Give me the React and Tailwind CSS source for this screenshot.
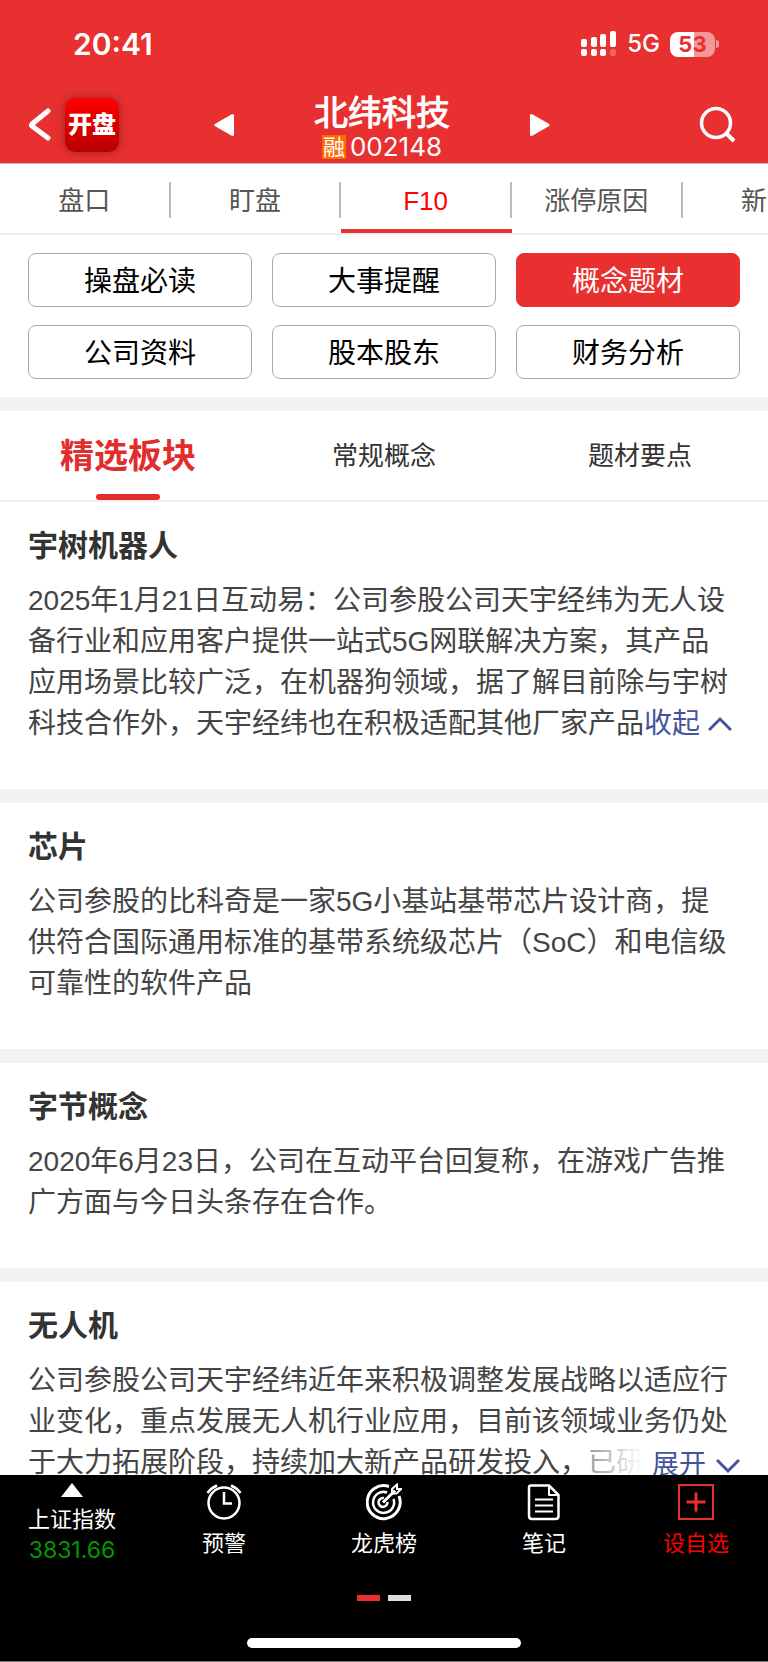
import { useState } from 'react';

const tabs = ['盘口', '盯盘', 'F10', '涨停原因', '新闻'];
const menus = ['操盘必读', '大事提醒', '概念题材', '公司资料', '股本股东', '财务分析'];
const topics = ['精选板块', '常规概念', '题材要点'];

const concepts = [
  {
    title: '宇树机器人',
    text: '2025年1月21日互动易：公司参股公司天宇经纬为无人设备行业和应用客户提供一站式5G网联解决方案，其产品应用场景比较广泛，在机器狗领域，据了解目前除与宇树科技合作外，天宇经纬也在积极适配其他厂家产品',
    state: 'open',
  },
  {
    title: '芯片',
    text: '公司参股的比科奇是一家5G小基站基带芯片设计商，提供符合国际通用标准的基带系统级芯片（SoC）和电信级可靠性的软件产品',
  },
  {
    title: '字节概念',
    text: '2020年6月23日，公司在互动平台回复称，在游戏广告推广方面与今日头条存在合作。',
  },
  {
    title: '无人机',
    text: '公司参股公司天宇经纬近年来积极调整发展战略以适应行业变化，重点发展无人机行业应用，目前该领域业务仍处于大力拓展阶段，持续加大新产品研发投入，已研',
    state: 'closed',
  },
];

// Signal, network type and battery
function StatusBar() {
  return (
    <div className="flex h-[86px] items-center justify-between pt-0.5 pr-[49px] pl-[73px] font-['Inter','Noto_Sans_CJK_SC',sans-serif] text-white">
      <span className="text-[30px] leading-9 font-semibold">20:41</span>
      <div className="flex items-center gap-[10px]">
        <svg width="36" height="26" viewBox="0 0 36 26" fill="#fff" aria-hidden="true">
          <rect x="0" y="8" width="6" height="8" rx="2" />
          <rect x="10" y="6" width="6" height="10" rx="2" />
          <rect x="19" y="3" width="6" height="13" rx="2" />
          <rect x="29" y="0" width="6" height="16" rx="2" />
          <rect x="0" y="18" width="6" height="7" rx="2" />
          <rect x="10" y="18" width="6" height="7" rx="2" />
          <rect x="19" y="18" width="6" height="7" rx="2" />
          <rect x="29" y="18" width="6" height="7" rx="2" opacity="0.25" />
        </svg>
        <span className="text-2xl leading-7 font-medium">5G</span>
        <div className="flex items-center gap-px">
          <span className="flex h-[25px] w-[45px] items-center justify-center rounded-lg bg-linear-to-r from-white from-54% to-white/50 to-54% text-[22px] leading-6 font-bold text-[#e83030]">
            53
          </span>
          <span className="h-2 w-[3px] rounded-r-full bg-white/50" />
        </div>
      </div>
    </div>
  );
}

// Stock title with previous / next arrows
function StockHeader() {
  return (
    <div className="grid h-[77px] grid-cols-[1fr_auto_1fr] items-center pr-8 pl-7 text-white">
      <div className="flex items-center justify-between">
        <div className="flex items-center gap-3">
          <button type="button" aria-label="返回">
            <svg width="25" height="36" viewBox="0 0 25 36" fill="none" stroke="#fff" strokeWidth="5" strokeLinecap="round" strokeLinejoin="round">
              <path d="M20 4 L4 17 Q3 18 4 19 L20 31" />
            </svg>
          </button>
          <span className="flex size-[54px] items-center justify-center rounded-[10px] bg-linear-to-b from-[#ff0000] to-[#b80000] text-2xl font-black shadow-[0_0_8px_rgba(0,0,0,0.35)]">
            开盘
          </span>
        </div>
        <button type="button" aria-label="上一只" className="mr-20">
          <svg width="20" height="24" viewBox="0 0 20 24" fill="#fff" stroke="#fff" strokeWidth="3" strokeLinejoin="round">
            <path d="M18.500 2.500 V21.500 L2 12 Z" />
          </svg>
        </button>
      </div>
      <div className="flex flex-col items-center pt-2">
        <h1 className="text-[34px] leading-9 [-webkit-text-stroke:1px_#fff]">北纬科技</h1>
        <p className="flex items-center gap-1 font-['Inter','Noto_Sans_CJK_SC',sans-serif] text-[26px] leading-8">
          <span className="bg-[#ff6a00] px-px text-[22px] leading-6">融</span>
          002148
        </p>
      </div>
      <div className="flex items-center justify-between">
        <button type="button" aria-label="下一只" className="ml-20">
          <svg width="20" height="24" viewBox="0 0 20 24" fill="#fff" stroke="#fff" strokeWidth="3" strokeLinejoin="round">
            <path d="M1.500 2.500 V21.500 L18 12 Z" />
          </svg>
        </button>
        <button type="button" aria-label="搜索">
          <svg width="38" height="38" viewBox="0 0 38 38" fill="none" stroke="#fff" strokeWidth="3.500">
            <circle cx="18" cy="17" r="14.500" />
            <path d="M28 27 L36 35" strokeWidth="4" />
          </svg>
        </button>
      </div>
    </div>
  );
}

function ConceptSection({ item }) {
  const [state, setState] = useState(item.state);

  return (
    <section className="relative border-b-[14px] border-[#f2f2f2] pt-[23px] pr-8 pb-[45px] pl-7">
      <h2 className="text-[30px] leading-[42px] font-bold text-[#333]">{item.title}</h2>
      <p className="mt-[13px] text-[28px] leading-[41px] text-[#444]">
        {item.text}
        {state === 'open' && (
          <button type="button" onClick={() => setState('closed')} className="inline-flex items-center gap-2 text-[#44549c]">
            收起
            <svg width="24" height="16" viewBox="0 0 24 16" fill="none" stroke="currentColor" strokeWidth="3">
              <path d="M1 14 L12 3 L23 14" />
            </svg>
          </button>
        )}
      </p>
      {state === 'closed' && (
        <button
          type="button"
          onClick={() => setState('open')}
          className="absolute right-0 bottom-[42px] flex items-center gap-[10px] bg-linear-to-r from-white/30 to-white to-35% pr-7 pl-[78px] text-[27px] leading-[41px] text-[#44549c]"
        >
          展开
          <svg width="24" height="16" viewBox="0 0 24 16" fill="none" stroke="currentColor" strokeWidth="3">
            <path d="M1 2 L12 13 L23 2" />
          </svg>
        </button>
      )}
    </section>
  );
}

function AlarmIcon() {
  return (
    <svg width="36" height="38" viewBox="0 0 36 38" fill="none" stroke="#fff" strokeWidth="2.500">
      <circle cx="18" cy="20" r="15.500" />
      <path d="M18 9 V20.500 H26" />
      <path d="M1.500 10 Q5 5 11 2.500 M34.500 10 Q31 5 25 2.500" />
    </svg>
  );
}

function TargetIcon() {
  return (
    <svg width="36" height="38" viewBox="0 0 36 38" fill="none" stroke="#fff" strokeWidth="2">
      <path d="M23 3.500 A16.500 16.500 0 1 0 33 13" strokeWidth="3" />
      <path d="M21 9.500 A10.500 10.500 0 1 0 27.500 16" strokeWidth="2.500" />
      <path d="M18 15 A4.500 4.500 0 1 0 21.500 19" strokeWidth="2.500" />
      <path d="M17 19.500 L29 7.500" strokeWidth="3" />
      <path d="M26 10 V6 L31 1.500 V6 H35 L30.500 10.500 H26" />
    </svg>
  );
}

function NoteIcon() {
  return (
    <svg width="36" height="38" viewBox="0 0 36 38" fill="none" stroke="#fff" strokeWidth="2.500" strokeLinejoin="round">
      <path d="M5 2.500 H23 L32.500 12 V33 Q32.500 36 29.500 36 H6 Q3 36 3 33 V4.500 Q3 2.500 5 2.500 Z" />
      <path d="M23 3 V12 H32" strokeWidth="2" />
      <path d="M9 16.500 H27 M9 22.500 H27 M9 28.500 H27" strokeWidth="2" />
    </svg>
  );
}

function AddIcon() {
  return (
    <svg width="36" height="38" viewBox="0 0 36 38" fill="none" stroke="#e83030" strokeWidth="2">
      <rect x="1" y="2" width="34" height="34" />
      <path d="M18 9.500 V28.500 M8.500 19 H27.500" strokeWidth="3" />
    </svg>
  );
}

// Bottom toolbar
function BottomBar() {
  const itemClass = 'flex flex-1 flex-col items-center gap-2';

  return (
    <footer className="flex h-[187px] shrink-0 flex-col items-center border-b border-[#777] bg-black text-[22px] leading-[30px] text-white">
      <div className="flex w-full pt-2">
        <button type="button" className="flex w-36 flex-col items-center">
          <svg width="22" height="14" viewBox="0 0 22 14" fill="#fff" aria-hidden="true">
            <path d="M11 0 L22 14 H0 Z" />
          </svg>
          <span className="mt-2">上证指数</span>
          <span className="font-['Inter','Noto_Sans_CJK_SC',sans-serif] text-[23px] text-[#009900]">3831.66</span>
        </button>
        <button type="button" className={itemClass}>
          <AlarmIcon />
          预警
        </button>
        <button type="button" className={itemClass}>
          <TargetIcon />
          龙虎榜
        </button>
        <button type="button" className={itemClass}>
          <NoteIcon />
          笔记
        </button>
        <button type="button" className="flex w-36 flex-col items-center gap-2 text-[#ff0000]">
          <AddIcon />
          设自选
        </button>
      </div>
      <div className="mt-auto flex gap-2">
        <span className="h-[6px] w-[23px] bg-[#e83030]" />
        <span className="h-[6px] w-[23px] bg-[#ddd]" />
      </div>
      <span className="mt-[37px] mb-[13px] h-[10px] w-[274px] rounded-full bg-white" />
    </footer>
  );
}

function App() {
  const [tab, setTab] = useState('F10');
  const [menu, setMenu] = useState('概念题材');
  const [topic, setTopic] = useState('精选板块');

  return (
    <div className="flex h-screen flex-col overflow-hidden bg-white font-['Liberation_Sans','Noto_Sans_CJK_SC',sans-serif]">
      <header className="shrink-0 bg-[#e83030]">
        <StatusBar />
        <StockHeader />
      </header>

      {/* Page tabs */}
      <nav className="flex h-[72px] shrink-0 overflow-hidden border-t border-b-2 border-t-[#bbb] border-b-[#eee]">
        {tabs.map((name) => (
          <button
            key={name}
            type="button"
            onClick={() => setTab(name)}
            className="relative flex w-2/9 shrink-0 items-center pt-0.5 text-[26px]"
          >
            <span
              className={`flex h-9 flex-1 items-center justify-center border-r-2 border-[#bbb] pt-1 ${
                tab === name ? 'text-[#ff0000]' : 'text-[#555]'
              }`}
            >
              {name}
            </span>
            {tab === name && <span className="absolute inset-x-0 bottom-0 h-1 bg-[#e83030]" />}
          </button>
        ))}
      </nav>

      <main className="min-h-0 flex-1 overflow-hidden">
        {/* F10 menu */}
        <div className="grid grid-cols-3 gap-x-5 gap-y-[18px] border-b-[14px] border-[#f2f2f2] px-7 py-[18px]">
          {menus.map((name) => (
            <button
              key={name}
              type="button"
              onClick={() => setMenu(name)}
              className={`h-[54px] rounded-lg border pt-1 text-[28px] ${
                menu === name ? 'border-[#e83030] bg-[#e83030] text-white' : 'border-[#aaa] text-black'
              }`}
            >
              {name}
            </button>
          ))}
        </div>

        {/* Topic tabs */}
        <div className="grid h-[91px] grid-cols-3 border-b-2 border-[#eee]">
          {topics.map((name) => (
            <button
              key={name}
              type="button"
              onClick={() => setTopic(name)}
              className={`relative pt-0.5 ${
                topic === name ? 'text-[34px] font-bold text-[#e22d2d]' : 'text-[26px] text-[#333]'
              }`}
            >
              {name}
              {topic === name && (
                <span className="absolute bottom-0 left-1/2 h-[6px] w-16 -translate-x-1/2 rounded-full bg-[#e22d2d]" />
              )}
            </button>
          ))}
        </div>

        {concepts.map((item) => (
          <ConceptSection key={item.title} item={item} />
        ))}
      </main>

      <BottomBar />
    </div>
  );
}

export default App;
